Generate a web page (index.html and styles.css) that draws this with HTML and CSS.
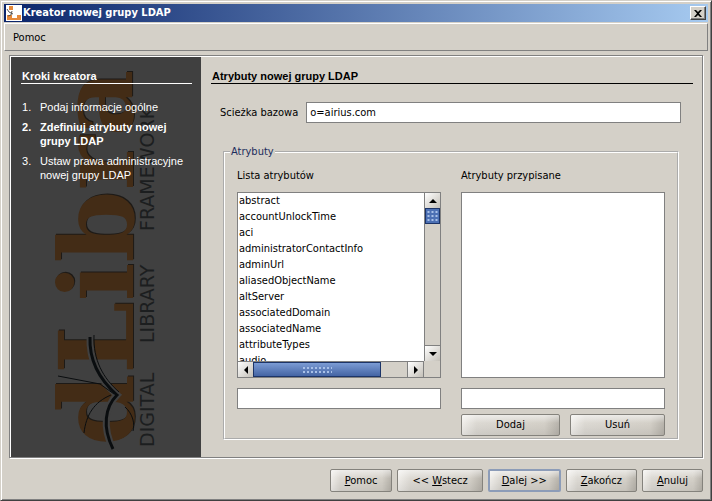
FILE: index.html
```html
<!DOCTYPE html>
<html lang="pl">
<head>
    <meta charset="UTF-8">
    <meta name="viewport" content="width=device-width, initial-scale=1.0">
    <title>Kreator nowej grupy LDAP</title>
    <link rel="stylesheet" href="styles.css">
</head>
<body>
    <div class="window">
        <header class="title-bar">
            <svg class="app-icon" viewBox="0 0 16 16" aria-hidden="true">
                <rect width="16" height="16" fill="#fff"/>
                <path d="M3 1h4v4H3zM1 10h5v3h5v-3h4v5H1z" fill="#e58a3c"/>
                <path d="M1 4l2 3 4 2M6 6l-1 4-3 1" fill="none" stroke="#555"/>
            </svg>
            <h1>Kreator nowej grupy LDAP</h1>
            <button class="close" aria-label="Zamknij">
                <svg viewBox="0 0 8 7" aria-hidden="true"><path d="M0 0h2l2 2 2-2h2L5 3.500 8 7H6L4 5 2 7H0l3-3.500z"/></svg>
            </button>
        </header>

        <nav class="menu-bar"><button>Pomoc</button></nav>

        <main class="panel">
            <aside class="steps">
                <svg class="brand" viewBox="0 0 190 400" aria-hidden="true">
                    <g transform="rotate(-90)">
                        <text class="brand-shadow" x="-388" y="123">dLibra</text>
                        <text class="brand-name" x="-389" y="122">dLibra</text>
                        <text class="brand-line" x="-390" y="143">DIGITAL</text>
                        <text class="brand-line" x="-286" y="143">LIBRARY</text>
                        <text class="brand-line" x="-174" y="143">FRAMEWORK</text>
                    </g>
                    <g fill="none">
                        <path d="M79 280c-1 24 10 43 27 58-12 12-15 32-4 54" stroke="#404040" stroke-width="7"/>
                        <g stroke="#0a0d0f">
                            <path d="M79 280c-1 24 10 43 27 58-12 12-15 32-4 54" stroke-width="3"/>
                            <path d="M83 278c-1 25 9 43 25 57" stroke-width="1"/>
                            <path d="M100 338c-17 7-25 20-27 38M47 319l42 8 14 10M114 350c8 7 10 17 8 24" stroke-width="1"/>
                        </g>
                    </g>
                </svg>
                <h2>Kroki kreatora</h2>
                <ol>
                    <li>Podaj informacje ogólne</li>
                    <li class="current">Zdefiniuj atrybuty nowej grupy LDAP</li>
                    <li>Ustaw prawa administracyjne nowej grupy LDAP</li>
                </ol>
            </aside>

            <form class="content" id="wizard">
                <h2>Atrybuty nowej grupy LDAP</h2>
                <div class="base-path">
                    <label for="path">Scieżka bazowa</label>
                    <input type="text" id="path" value="o=airius.com">
                </div>

                <fieldset>
                    <legend>Atrybuty</legend>
                    <div class="columns">
                        <div class="column">
                            <label for="available">Lista atrybutów</label>
                            <div class="scroll-pane">
                                <select id="available" size="12" multiple>
                                    <option>abstract</option>
                                    <option>accountUnlockTime</option>
                                    <option>aci</option>
                                    <option>administratorContactInfo</option>
                                    <option>adminUrl</option>
                                    <option>aliasedObjectName</option>
                                    <option>altServer</option>
                                    <option>associatedDomain</option>
                                    <option>associatedName</option>
                                    <option>attributeTypes</option>
                                    <option>audio</option>
                                </select>
                                <div class="scrollbar vertical">
                                    <button type="button" aria-label="W górę"><svg viewBox="0 0 8 8"><path d="M0 6l4-4 4 4z"/></svg></button>
                                    <div class="track"><div class="thumb"></div></div>
                                    <button type="button" aria-label="W dół"><svg viewBox="0 0 8 8"><path d="M0 2l4 4 4-4z"/></svg></button>
                                </div>
                                <div class="scrollbar horizontal">
                                    <button type="button" aria-label="W lewo"><svg viewBox="0 0 8 8"><path d="M6 0L2 4l4 4z"/></svg></button>
                                    <div class="track"><div class="thumb"></div></div>
                                    <button type="button" aria-label="W prawo"><svg viewBox="0 0 8 8"><path d="M2 0l4 4-4 4z"/></svg></button>
                                </div>
                            </div>
                            <input type="text" aria-label="Atrybut">
                        </div>
                        <div class="column">
                            <label for="assigned">Atrybuty przypisane</label>
                            <div class="scroll-pane single">
                                <select id="assigned" size="12" multiple></select>
                            </div>
                            <input type="text" aria-label="Wartość atrybutu">
                        </div>
                        <div class="actions">
                            <button type="button" class="btn">Dodaj</button>
                            <button type="button" class="btn">Usuń</button>
                        </div>
                    </div>
                </fieldset>
            </form>
        </main>

        <footer class="buttons">
            <button class="btn"><u>P</u>omoc</button>
            <button class="btn">&lt;&lt; <u>W</u>stecz</button>
            <button class="btn default"><u>D</u>alej &gt;&gt;</button>
            <button class="btn"><u>Z</u>akończ</button>
            <button class="btn"><u>A</u>nuluj</button>
        </footer>
    </div>
</body>
</html>
```
FILE: styles.css
```css
:root {
    --face: #d4d0c8;
    --shadow: #808080;
    --ui: "DejaVu Sans Condensed", "DejaVu Sans", sans-serif;
}

* {
    box-sizing: border-box;
}

body {
    margin: 0;
    background: var(--face);
    font: 11px/14px var(--ui);
    color: #000;
}

button, input, select {
    font: inherit;
    color: inherit;
    margin: 0;
    border-radius: 0;
}

h1, h2 {
    margin: 0;
}

.window {
    display: flex;
    flex-direction: column;
    min-height: 100vh;
    padding: 3px;
    border: 1px solid;
    border-color: var(--face) #404040 #404040 var(--face);
    box-shadow: inset 1px 1px #fff, inset -1px -1px var(--shadow);
}

/* title bar */
.title-bar {
    display: flex;
    align-items: center;
    height: 18px;
    padding: 0 2px;
    background: linear-gradient(to right, #0a246a, #a6caf0);
}

.app-icon {
    width: 16px;
    height: 16px;
    margin-right: 1px;
}

.title-bar h1 {
    flex: 1;
    font: bold 11px/18px var(--ui);
    color: #fff;
}

.close {
    display: flex;
    align-items: center;
    justify-content: center;
    width: 16px;
    height: 14px;
    padding: 0;
    background: var(--face);
    border: 1px solid;
    border-color: #fff #404040 #404040 #fff;
    box-shadow: inset -1px -1px var(--shadow);
}

.close svg {
    width: 8px;
    height: 7px;
}

.menu-bar {
    height: 28px;
    margin-top: 1px;
    padding: 1px 8px 0;
    border: 1px solid;
    border-color: #fff var(--shadow) var(--shadow) #fff;
}

.menu-bar button {
    height: 26px;
    padding: 0;
    border: 0;
    background: none;
}

/* main panel */
.panel {
    display: flex;
    flex: 1;
    margin: 4px 5px 0;
    border: 1px solid var(--shadow);
    box-shadow: inset 1px 1px #fff, 1px 1px #fff;
    padding: 1px 0 0 1px;
}

.steps {
    position: relative;
    width: 190px;
    padding: 12px 9px 0 10px;
    background: #404040;
    color: #fff;
    font-family: "Liberation Sans", sans-serif;
}

.brand {
    position: absolute;
    top: 0;
    left: 0;
    width: 190px;
    height: 400px;
}

.brand-name,
.brand-shadow {
    font: bold 103px "DejaVu Serif", serif;
    fill: #432c16;
}

.brand-shadow {
    fill: #1d1a17;
}

.brand-line {
    font: 19px "DejaVu Sans", sans-serif;
    fill: #1c1e1f;
}

.steps h2,
.steps ol {
    position: relative;
}

.steps h2,
.content h2 {
    padding: 0 1px;
    font: bold 11px/14px "Liberation Sans", sans-serif;
    border-bottom: 1px solid;
}

.steps ol {
    margin: 16px 0 0;
    padding: 0;
    list-style: none;
    counter-reset: step;
}

.steps li {
    display: flex;
    margin-bottom: 6px;
    padding-left: 1px;
    counter-increment: step;
}

.steps li::before {
    content: counter(step) ".";
    flex: none;
    width: 18px;
}

.steps .current {
    font-weight: bold;
}

.content {
    display: flex;
    flex: 1;
    flex-direction: column;
    padding: 12px 9px 17px 10px;
}

.base-path {
    display: flex;
    align-items: center;
    gap: 8px;
    margin: 18px 12px 0 9px;
}

input {
    width: 100%;
    height: 21px;
    padding: 0 3px;
    background: #fff;
    border: 1px solid var(--shadow);
    outline: none;
}

.base-path input {
    flex: 1;
}

.base-path label {
    white-space: nowrap;
}

fieldset {
    display: flex;
    flex: 1;
    min-width: 0;
    margin: 22px 14px 0 12px;
    padding: 0 12px 2px;
    border: 2px groove #fff;
}

legend {
    margin-left: -7px;
    padding: 0 1px;
    color: #1c2c5c;
}

.columns {
    display: grid;
    flex: 1;
    grid-template-columns: 1fr 1fr;
    grid-template-rows: 1fr 22px;
    gap: 5px 20px;
    padding-top: 10px;
}

.column {
    display: flex;
    flex-direction: column;
    min-width: 0;
}

/* list with scrollbars */
.scroll-pane {
    display: grid;
    flex: 1;
    grid-template-columns: 1fr 16px;
    grid-template-rows: 1fr 16px;
    min-height: 0;
    margin: 9px 0 10px;
    border: 1px solid var(--shadow);
}

.scroll-pane.single {
    display: flex;
}

select {
    width: 100%;
    min-width: 0;
    height: 0;
    min-height: 100%;
    padding: 1px 0 0;
    border: 0;
    background: #fff;
    overflow: hidden;
    outline: none;
    scrollbar-width: none;
}

option {
    height: 16px;
    min-height: 16px;
    padding: 0 1px;
    line-height: 16px;
}

.scrollbar {
    display: flex;
}

.scrollbar button {
    display: flex;
    align-items: center;
    justify-content: center;
    width: 15px;
    height: 15px;
    padding: 0;
    border: 0;
    background: linear-gradient(135deg, #fff, #c4c0b8);
}

.scrollbar svg {
    width: 8px;
    height: 8px;
}

.track {
    display: flex;
    flex: 1;
}

.thumb {
    border: 1px solid #1c3468;
    background: radial-gradient(#a8c0e8 1px, transparent 1px) center / 4px 4px, #4c70b4;
}

.vertical {
    flex-direction: column;
    border-left: 1px solid var(--shadow);
}

.vertical .track {
    border-bottom: 1px solid var(--shadow);
}

.vertical .thumb {
    width: 15px;
    height: 16px;
}

.horizontal {
    border-top: 1px solid var(--shadow);
    border-right: 1px solid var(--shadow);
}

.horizontal .track {
    border-right: 1px solid var(--shadow);
}

.horizontal .thumb {
    display: flex;
    align-items: center;
    justify-content: center;
    width: 83%;
    background: linear-gradient(#7c9cd4, #4464a4);
}

.horizontal .thumb::after {
    content: "";
    width: 30px;
    height: 8px;
    background: radial-gradient(#a8c0e8 1px, transparent 1px) 0 0 / 4px 4px;
}

/* buttons */
.btn {
    height: 23px;
    padding: 0 14px;
    border: 1px solid #84827c;
    border-radius: 2px;
    background: linear-gradient(#fff8, #fff0 40%, #0001), linear-gradient(to right, #f0eeea, #dcd9d3 15%, #d4d0c8 85%, #b8b4ac);
}

.btn.default {
    border: 2px solid #8c9cb8;
    padding: 0 12px;
}

.actions {
    display: grid;
    grid-column: 2;
    grid-template-columns: 99px 1fr;
    gap: 10px;
}

.actions .btn {
    height: 22px;
}

.buttons {
    display: flex;
    justify-content: flex-end;
    gap: 5px;
    padding: 11px 5px 5px;
}
```
